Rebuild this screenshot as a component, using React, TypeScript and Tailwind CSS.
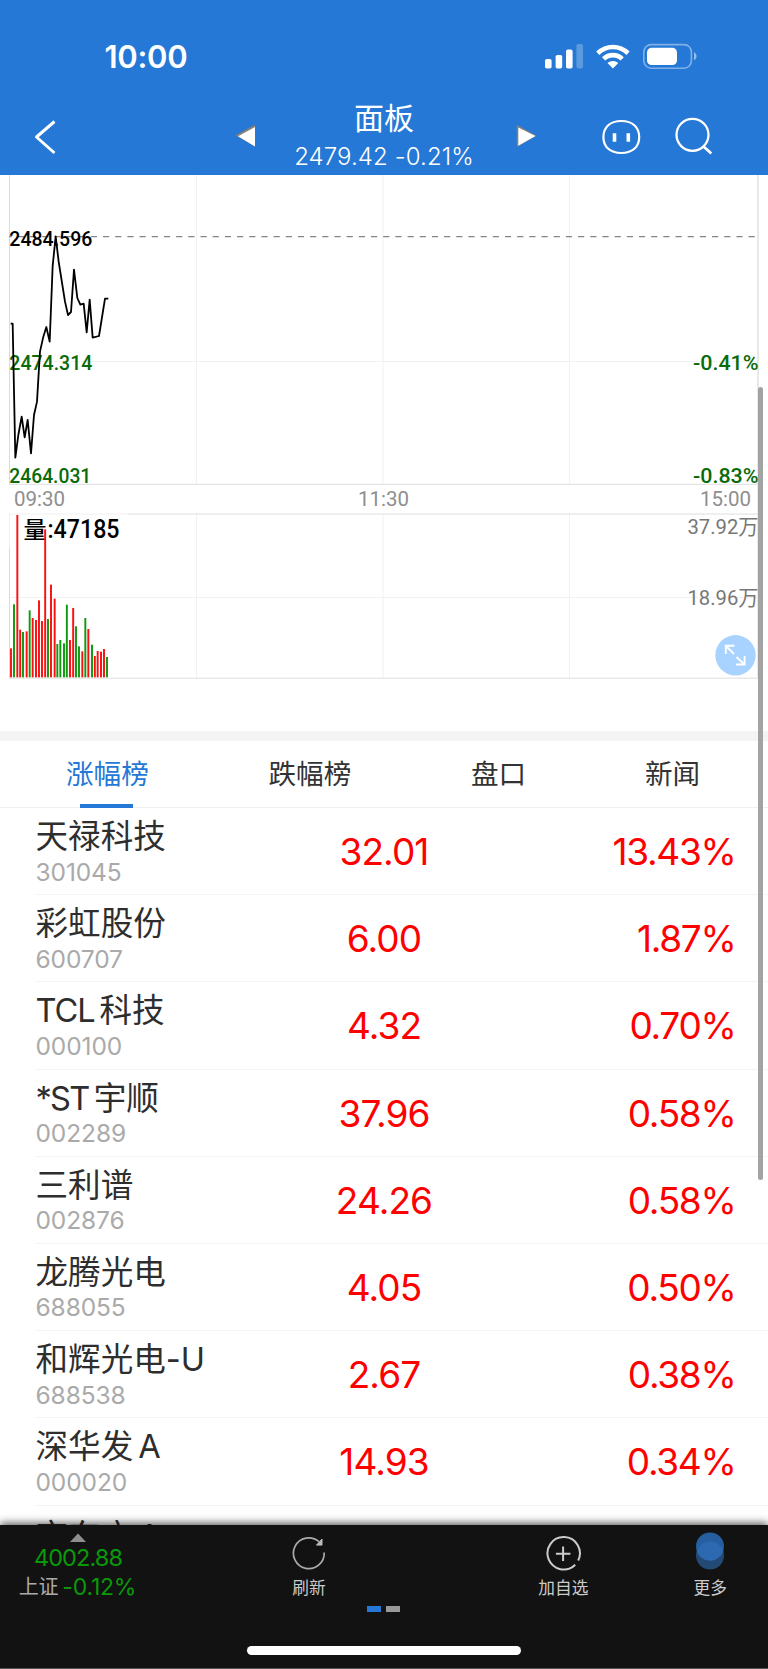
import React from "react";

type Stock = { name: React.ReactNode; code: string; price: string; change: string };

const latinGap = <span className="inline-block w-[5px]" />;

const stocks: Stock[] = [
  { name: "天禄科技", code: "301045", price: "32.01", change: "13.43%" },
  { name: "彩虹股份", code: "600707", price: "6.00", change: "1.87%" },
  { name: <><span className="tracking-[-1.1px]">TCL</span>{latinGap}科技</>, code: "000100", price: "4.32", change: "0.70%" },
  { name: <><span className="tracking-[-1.7px]">*ST</span>{latinGap}宇顺</>, code: "002289", price: "37.96", change: "0.58%" },
  { name: "三利谱", code: "002876", price: "24.26", change: "0.58%" },
  { name: "龙腾光电", code: "688055", price: "4.05", change: "0.50%" },
  { name: "和辉光电-U", code: "688538", price: "2.67", change: "0.38%" },
  { name: <>深华发{latinGap}A</>, code: "000020", price: "14.93", change: "0.34%" },
];

/* x centre, top, colour: all in thirds of a pixel */
const volumes: [number, number, "r" | "g"][] = [
  [33, 505, "r"], [42, 373, "g"], [52, 105, "r"], [60.5, 449, "r"], [69, 456, "g"],
  [80, 454, "r"], [89, 391, "g"], [98, 414, "r"], [108, 420, "r"], [117, 361, "r"],
  [126, 423, "r"], [135.5, 148, "r"], [144, 417, "g"], [153, 314, "r"], [164, 356, "r"],
  [172, 492, "g"], [181, 480, "g"], [192, 490, "g"], [200.5, 374, "g"], [210, 480, "r"],
  [219.5, 384, "r"], [228, 439, "g"], [237, 499, "g"], [247, 514, "r"], [256, 414, "g"],
  [265, 447, "r"], [276, 494, "g"], [284.5, 528, "r"], [293, 513, "r"], [303, 515, "r"],
  [312, 507, "r"], [321, 531, "g"],
];

const pricePoints =
  "32,461 38,461 46,863 55,795 65,740 74,802 83,750 93,850 102,735 111,695 116,610 120,545 130,500 139,471 149,515 158,288 167,199 176,275 195,395 204,435 213,426 222,299 232,384 241,404 251,401 260,487 269,389 278,503 297,498 315,386 325,386";

function StatusBar() {
  return (
    <div className="flex h-[96px] items-start justify-between pl-[104.500px] pr-[70px] text-white">
      <span className="mt-[37px] text-[31px] font-semibold leading-[40px] tracking-[-0.3px]">10:00</span>
      <svg width="154" height="28" viewBox="544 43 154 28" className="mt-[43px]" fill="#fff">
        <rect x="545" y="59" width="6.6" height="9.5" rx="1.8" />
        <rect x="555.6" y="55" width="6.6" height="13.5" rx="1.8" />
        <rect x="566" y="49.6" width="6.6" height="18.9" rx="1.8" />
        <rect x="576.4" y="44" width="6.6" height="24.5" rx="1.8" fillOpacity=".25" />
        <path d="M596.2 51.6a23.6 23.6 0 0 1 33.4 0l-3.1 3.4a19.2 19.2 0 0 0-27.2 0z" />
        <path d="M602 57.3a15.6 15.6 0 0 1 21.8 0l-3.2 3.3a11 11 0 0 0-15.4 0z" />
        <path d="M607.5 63.1a7.9 7.9 0 0 1 10.8 0l-5.4 5.3z" />
        <rect x="643.8" y="44.6" width="47.6" height="23.6" rx="7.4" fill="none" stroke="#fff" strokeOpacity=".42" strokeWidth="1.6" />
        <rect x="647" y="47.8" width="30" height="17.2" rx="4.6" />
        <path d="M694 52.3c3.4 1.3 3.4 6.8 0 8z" fillOpacity=".5" />
      </svg>
    </div>
  );
}

function TitleBar() {
  return (
    <div className="flex h-[79px] text-white">
      <svg width="230" height="79" viewBox="0 96 230 79" fill="none" stroke="#fff" strokeWidth="3">
        <path d="M54.5 121.5 36.500 137 54.500 153" strokeLinejoin="round" />
      </svg>
      <svg width="56" height="79" viewBox="230 96 56 79">
        <path d="M235.500 135.300 255 124.800V146.600z" fill="#857f7c" />
        <path d="M238 136.300 255 127V146.600z" fill="#fff" />
      </svg>
      <div className="flex w-[196px] flex-col items-center">
        <h1 className="mt-[4px] text-[30px] font-normal leading-[36px]">面板</h1>
        <p className="mt-[3px] whitespace-nowrap text-[24px] font-light leading-[36px] tracking-[0.1px]">2479.42 -0.21%</p>
      </div>
      <svg width="286" height="79" viewBox="482 96 286 79" fill="none" stroke="#fff">
        <path d="M516.800 124.800 536.500 135.800 516.800 147z" fill="#857f7c" stroke="none" />
        <path d="M518.300 127.500 535.500 136 518.300 145.800z" fill="#fff" stroke="none" />
        <path d="M621.300 121C633 121 639.200 127.500 639.200 137S633 153 621.300 153 603.400 146.500 603.400 137 609.600 121 621.300 121z" strokeWidth="2.200" />
        <path d="M614.500 133.300v8.400M628.300 133.300v8.400" strokeWidth="3.600" />
        <circle cx="692.500" cy="134.800" r="16" strokeWidth="2.300" />
        <path d="M703.500 146.500 711.300 153.600" strokeWidth="2.700" />
      </svg>
    </div>
  );
}

function Charts() {
  return (
    <div className="relative h-[556px]">
      <svg width="768" height="556" viewBox="0 175 768 556" className="font-[Roboto,'Noto_Sans_CJK_SC',sans-serif]">
        <g fill="none" stroke="#f1f1f1" strokeWidth="1">
          <path d="M196.500 175V484M383 175V484M569.500 175V484M10 361.500H758M196.500 514V678M383 514V678M569.500 514V678M10 597.500H758" />
          <path d="M9.500 175V484.500M9.500 548V678" stroke="#dcdcdc" />
          <path d="M9.500 514V548" stroke="#f1f1f1" />
          <path d="M758 175V678" stroke="#e4e4e4" strokeWidth="1.600" />
          <path d="M9 484.300H758M128 514H758M9 678.200H758" stroke="#dedede" />
          <path d="M9 514H128" stroke="#f0f0f0" />
        </g>
        <path d="M9 236.600H758" stroke="#858585" strokeWidth="1.300" strokeDasharray="6.180 6" strokeDashoffset="3.400" />
        <g fontSize="21" fontWeight="500">
          <text x="9.300" y="245.800" textLength="83" lengthAdjust="spacingAndGlyphs" fill="#000">2484.596</text>
          <text x="9.300" y="370" textLength="83" lengthAdjust="spacingAndGlyphs" fill="#0a6b0a">2474.314</text>
          <text x="9.300" y="482.500" textLength="82" lengthAdjust="spacingAndGlyphs" fill="#0a6b0a">2464.031</text>
          <text x="693" y="370" textLength="65.500" lengthAdjust="spacingAndGlyphs" fill="#0a6b0a">-0.41%</text>
          <text x="693" y="482.500" textLength="65.500" lengthAdjust="spacingAndGlyphs" fill="#0a6b0a">-0.83%</text>
          <text x="23.500" y="537.500" fontSize="23" fill="#000">量</text>
          <text x="47.500" y="537.800" fontSize="25" textLength="72" lengthAdjust="spacingAndGlyphs" fill="#000">:47185</text>
        </g>
        <g fontSize="21" fill="#8e8e8e">
          <text x="14" y="506.300" textLength="51" lengthAdjust="spacingAndGlyphs">09:30</text>
          <text x="358" y="506.300" textLength="51" lengthAdjust="spacingAndGlyphs">11:30</text>
          <text x="700" y="506.300" textLength="51" lengthAdjust="spacingAndGlyphs">15:00</text>
        </g>
        <g fontSize="21" fill="#777">
          <text x="687.500" y="534.300" textLength="71" lengthAdjust="spacingAndGlyphs">37.92万</text>
          <text x="687.500" y="605.300" textLength="71" lengthAdjust="spacingAndGlyphs">18.96万</text>
        </g>
        <g transform="translate(0 170) scale(.33333)">
          <polyline points={pricePoints} fill="none" stroke="#000" strokeWidth="5.400" strokeLinejoin="round" />
        </g>
        <g transform="translate(0 480) scale(.33333)">
          {volumes.map(([x, top, c]) => (
            <rect key={x} x={x - 2.9} y={top} width="5.800" height={592 - top} fill={c === "r" ? "#fa1010" : "#0f990f"} />
          ))}
        </g>
        <circle cx="735.500" cy="655.300" r="20.200" fill="#a8d2ff" />
        <path d="M734 654 726 646M725.800 654V645.800H734.500M736.500 657 744.500 664.500M744.600 656V664.500H736" fill="none" stroke="#fff" strokeWidth="1.900" />
      </svg>
    </div>
  );
}

function Tabs() {
  return (
    <nav className="flex h-[67.500px] shrink-0 border-b border-[#f0f0f0] text-[27.600px] leading-[67px] text-[#333]">
      <div className="relative ml-[66px] w-[83px] whitespace-nowrap text-[#2678d6]">
        涨幅榜
        <span className="absolute -bottom-px left-[14px] h-[4px] w-[53px] bg-[#2678d6]" />
      </div>
      <div className="ml-[119.500px] w-[83px] whitespace-nowrap">跌幅榜</div>
      <div className="ml-[119.500px] w-[56px] whitespace-nowrap">盘口</div>
      <div className="ml-[118px] w-[56px] whitespace-nowrap">新闻</div>
    </nav>
  );
}

function StockName({ children }: { children: React.ReactNode }) {
  return <div className="whitespace-nowrap text-[32.600px] leading-[40px] text-[#2e2e2e]">{children}</div>;
}

function StockRow({ name, code, price, change }: Stock) {
  return (
    <li className="ml-[35px] grid h-[87.200px] shrink-0 grid-cols-[221px_256px_1fr] border-b border-[#f3f3f3]">
      <div className="pl-[0.500px] pt-[8px]">
        <StockName>{name}</StockName>
        <div className="mt-[1.500px] text-[24.500px] leading-[28px] tracking-[-0.1px] text-[#aaa]">{code}</div>
      </div>
      <div className="text-center text-[37px] leading-[87px] tracking-[-0.9px] text-[#ff0000]">{price}</div>
      <div className="pr-[32.500px] text-right text-[37px] leading-[87px] tracking-[-1.3px] text-[#ff0000]">{change}</div>
    </li>
  );
}

function BottomBar() {
  return (
    <footer className="relative z-10 flex h-[144.500px] shrink-0 flex-col border-b border-[#555] bg-[#121212] text-[#ccc] shadow-[0_-2px_8px_rgba(0,0,0,0.65)]">
      <div className="flex h-[80px] pt-[7px]">
        <div className="flex w-[156px] flex-col items-center">
          <svg width="16" height="9" className="mt-[1px]"><path d="M0 9 8 .5 16 9z" fill="#8d8d8d" /></svg>
          <div className="mt-[1px] text-[23.500px] leading-[30px] tracking-[-0.9px] text-[#0a990a]">4002.88</div>
          <div className="flex items-center gap-[4px] whitespace-nowrap pr-[1px] leading-[28px] tracking-[-0.2px]">
            <span className="text-[20px] text-[#aaa]">上证</span>
            <span className="text-[23px] text-[#0a990a]">-0.12%</span>
          </div>
        </div>
        <div className="ml-[102px] flex w-[102px] flex-col items-center">
          <svg width="40" height="44" viewBox="289 1531.500 40 44" fill="none">
            <path d="M319 1541.200A15.400 15.400 0 1 0 324.200 1552" stroke="#aaa" strokeWidth="1.700" />
            <path d="M322 1538.500V1544.600H316.500z" fill="#bbb" stroke="#bbb" />
          </svg>
          <span className="text-[16.700px] leading-[24px]">刷新</span>
        </div>
        <div className="ml-[152.300px] flex w-[102px] flex-col items-center">
          <svg width="40" height="44" viewBox="543.600 1531.500 40 44" fill="none" stroke="#ccc" strokeWidth="2">
            <path d="M578.800 1560A16.200 16.200 0 1 0 575.800 1564.200M556.500 1553.300H571M563.700 1546V1560.500" />
          </svg>
          <span className="text-[16.700px] leading-[24px]">加自选</span>
        </div>
        <div className="ml-[45px] flex w-[102px] flex-col items-center">
          <svg width="40" height="44" viewBox="690 1531.500 40 44">
            <circle cx="710" cy="1555" r="14" fill="#234975" />
            <circle cx="710" cy="1546" r="14" fill="#265e9f" />
            <path d="M696.700 1550.500A14 14 0 0 1 723.300 1550.500A14 14 0 0 1 696.700 1550.500" fill="#2c69b0" />
          </svg>
          <span className="text-[16.700px] leading-[24px]">更多</span>
        </div>
      </div>
      <div className="mt-[1.500px] flex justify-center gap-[5px] pr-[1px]">
        <span className="h-[6px] w-[14px] bg-[#2678d6]" />
        <span className="h-[6px] w-[14px] bg-[#999]" />
      </div>
      <div className="mx-auto mt-[33.500px] h-[9px] w-[274px] rounded-full bg-white" />
    </footer>
  );
}

export default function App() {
  return (
    <div className="relative flex h-[1669px] w-[768px] flex-col overflow-hidden bg-white font-[Inter,'Noto_Sans_CJK_SC',sans-serif]">
      <header className="h-[175px] shrink-0 bg-[#2578d5]">
        <StatusBar />
        <TitleBar />
      </header>
      <main className="flex min-h-0 flex-1 flex-col overflow-hidden">
        <Charts />
        <div className="h-[9.500px] shrink-0 bg-[#f4f4f4]" />
        <Tabs />
        <ul className="flex flex-col">
          {stocks.map((s) => (
            <StockRow key={s.code} {...s} />
          ))}
          <li className="ml-[35px] pl-[0.500px] pt-[10px]">
            <StockName>京东方{latinGap}A</StockName>
          </li>
        </ul>
      </main>
      <BottomBar />
      <div className="absolute left-[757.500px] top-[387px] h-[793px] w-[5.300px] rounded-full bg-[#a3a3a3]" />
    </div>
  );
}
